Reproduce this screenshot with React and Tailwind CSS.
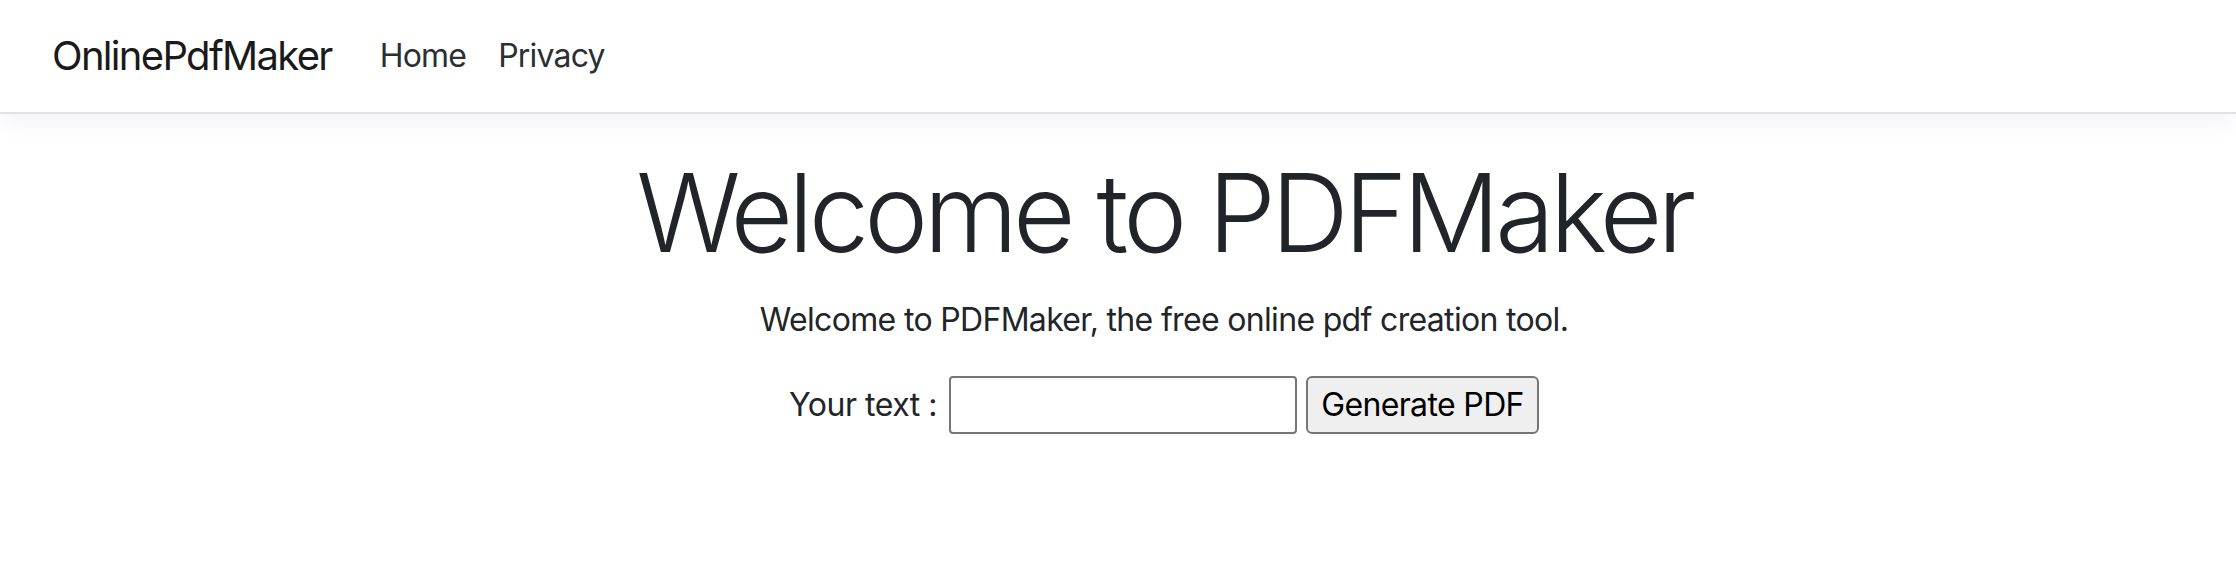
import React from 'react';

export default function App() {
  return (
    <div className="min-h-[576px] bg-white font-['Inter','Liberation_Sans',sans-serif] text-[#212529]">
      {/* Navbar */}
      <header className="border-b-2 border-[#dee2e6] bg-white shadow-[0_8px_24px_rgba(0,0,0,0.05)] mb-8">
        <nav className="flex items-center h-[112px] pl-[52px]">
          <a href="#" className="text-[40px] leading-[60px] tracking-[-0.042em] text-[#1a1a1a] mr-8">OnlinePdfMaker</a>
          <ul className="flex items-center">
            <li><a href="#" className="block px-4 py-4 text-[32px] leading-[48px] tracking-[-0.025em] text-[#2b2f33]">Home</a></li>
            <li><a href="#" className="block px-4 py-4 text-[32px] leading-[48px] tracking-[-0.025em] text-[#2b2f33]">Privacy</a></li>
          </ul>
        </nav>
      </header>

      {/* Main */}
      <main className="pl-[92px] text-center">
        <h1 className="text-[108px] leading-[134px] font-light tracking-[-0.044em] mb-4">Welcome to PDFMaker</h1>
        <p className="text-[32px] leading-[48px] tracking-[-0.021em] mb-8">Welcome to PDFMaker, the free online pdf creation tool.</p>
        <form className="flex items-center justify-center text-[32px] tracking-[-0.015em]" onSubmit={e => e.preventDefault()}>
          <label htmlFor="txt" className="mr-3">Your text :</label>
          <input
            id="txt"
            type="text"
            className="w-[348px] h-[58px] border-2 border-[#767676] rounded-[4px] bg-white px-2 text-[32px] outline-none"
          />
          <button
            type="submit"
            className="ml-[9px] w-[233px] h-[58px] border-2 border-[#767676] rounded-[6px] bg-[#efefef] text-black text-[32px] leading-none tracking-[-0.02em]"
          >
            Generate PDF
          </button>
        </form>
      </main>
    </div>
  );
}
